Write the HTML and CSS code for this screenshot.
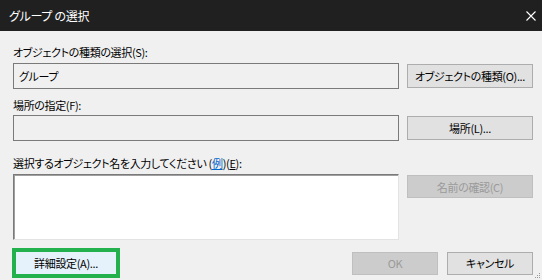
FILE: index.html
```html
<!DOCTYPE html>
<html lang="ja">
<head>
  <meta charset="UTF-8" />
  <title>グループ の選択</title>
  <link rel="stylesheet" href="styles.css">
</head>
<body>

  <div class="dialog">
    <div class="titlebar">
      <span class="title">グループ の選択</span>
      <svg class="close" width="10" height="10" viewBox="0 0 10 10">
        <path d="M0.5 0.5 L9.5 9.5 M9.5 0.5 L0.5 9.5" stroke="#fff" stroke-width="1.1" fill="none"/>
      </svg>
    </div>

    <div class="content">
      <div class="label label-first">オブジェクトの種類の選択(S):</div>
      <div class="row">
        <div class="field">グループ</div>
        <button class="btn">オブジェクトの種類(O)...</button>
      </div>

      <div class="label label-second">場所の指定(F):</div>
      <div class="row row-second">
        <div class="field"></div>
        <button class="btn">場所(L)...</button>
      </div>

      <div class="label label-third">選択するオブジェクト名を入力してください&nbsp;(<a href="#" class="link">例</a>)(<u>E</u>):</div>
      <div class="row row-top">
        <div class="textbox"></div>
        <button class="btn" disabled>名前の確認(C)</button>
      </div>

      <div class="footer">
        <div class="highlight">
          <button class="btn btn-focus">詳細設定(A)...</button>
        </div>
        <div class="actions">
          <button class="btn btn-small" disabled>OK</button>
          <button class="btn btn-small">キャンセル</button>
        </div>
      </div>
    </div>

    <svg class="grip" width="6" height="6" viewBox="0 0 6 6">
      <rect x="4" y="0" width="1" height="1" fill="#9a9a9a"/>
      <rect x="2" y="2" width="1" height="1" fill="#9a9a9a"/>
      <rect x="4" y="2" width="1" height="1" fill="#9a9a9a"/>
      <rect x="0" y="4" width="1" height="1" fill="#9a9a9a"/>
      <rect x="2" y="4" width="1" height="1" fill="#9a9a9a"/>
      <rect x="4" y="4" width="1" height="1" fill="#9a9a9a"/>
    </svg>
  </div>

</body>
</html>
```

FILE: styles.css
```css
* { margin: 0; padding: 0; box-sizing: border-box; }
body {
  background: #f0f0f0;
  font-family: "Noto Sans CJK JP", "Noto Sans", sans-serif;
  font-size: 11px;
  letter-spacing: -0.35px;
  font-feature-settings: "palt";
  color: #000;
  overflow: hidden;
}
.dialog {
  position: relative;
  width: 542px;
  height: 280px;
  background: #f0f0f0;
}

/* Title bar */
.titlebar {
  height: 31px;
  background: #202020;
  color: #fff;
  display: flex;
  align-items: center;
  justify-content: space-between;
  padding: 0 6px 0 9px;
}
.title {
  font-size: 12px;
  line-height: 16px;
  letter-spacing: -0.3px;
}
.close { display: block; }

/* Body */
.content {
  padding: 0 9px 0 13px;
}
.label {
  line-height: 16px;
  height: 16px;
  white-space: nowrap;
}
.label-first { margin-top: 13px; }
.label-second { margin-top: 8px; }
.label-third { margin-top: 14px; }
.link {
  color: #0066cc;
  text-decoration: underline;
}
.row {
  display: grid;
  grid-template-columns: 386px 126px;
  column-gap: 8px;
  align-items: center;
  margin-top: 3px;
}
.row-second { margin-top: 2px; }
.row-top { align-items: start; }
.row-top .btn { margin-top: 1px; }

.field {
  height: 26px;
  border: 1px solid #7a7a7a;
  background: #f0f0f0;
  padding: 0 5px;
  line-height: 24px;
}
.textbox {
  height: 66px;
  background: #fff;
  border: 1px solid;
  border-color: #7a7a7a #e3e3e3 #e3e3e3 #7a7a7a;
  box-shadow: inset 1px 1px 0 #a0a0a0;
}

.btn {
  height: 24px;
  background: #e1e1e1;
  border: 1px solid #adadad;
  font: inherit;
  letter-spacing: inherit;
  font-feature-settings: inherit;
  color: #000;
  line-height: 20px;
  text-align: center;
  white-space: nowrap;
}
.btn:disabled {
  background: #cccccc;
  border-color: #bfbfbf;
  color: #9a9a9a;
}
.row-top .btn { height: 23px; }

/* Footer */
.footer {
  display: flex;
  justify-content: space-between;
  align-items: center;
  margin-top: 8px;
  margin-left: -1px;
}
.highlight {
  border: 4px solid #22b14c;
  width: 108px;
  height: 30px;
  display: flex;
}
.btn-focus {
  flex: 1;
  height: 22px;
  background: #e5f1fb;
  border: none;
}
.actions {
  display: flex;
  gap: 9px;
}
.btn-small {
  width: 86px;
  height: 23px;
}

.grip {
  position: absolute;
  right: 1px;
  bottom: 1px;
}
```
